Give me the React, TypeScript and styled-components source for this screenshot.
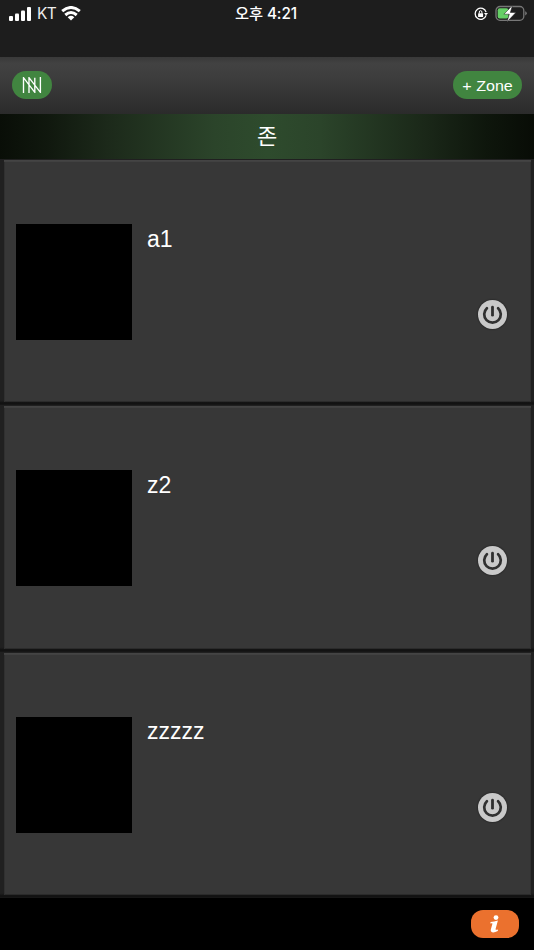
import React from "react";
import styled, { createGlobalStyle } from "styled-components";

const GlobalStyle = createGlobalStyle`
  * { box-sizing: border-box; }
  body { margin: 0; background: #000; overflow: hidden; }
  button { border: 0; padding: 0; font: inherit; color: inherit; }
  h1, h2, p { margin: 0; font-weight: 400; }
`;

const Screen = styled.div`
  width: 534px;
  height: 950px;
  display: flex;
  flex-direction: column;
  color: #fff;
  background: #000;
  font-family: "Liberation Sans", "Noto Sans CJK KR", sans-serif;
  overflow: hidden;
`;

const StatusBar = styled.header`
  flex: none;
  height: 57px;
  padding: 3px 7px 0 9px;
  display: grid;
  grid-template-columns: 1fr 64px 1fr;
  align-items: start;
  background: #1d1d1d;
`;

const StatusSide = styled.div<{ $end?: boolean }>`
  height: ${(p) => (p.$end ? 22 : 20)}px;
  display: flex;
  align-items: center;
  justify-content: ${(p) => (p.$end ? "flex-end" : "flex-start")};
  gap: ${(p) => (p.$end ? 7 : 6)}px;
`;

const Carrier = styled.span`
  width: 18px;
  padding-top: 1px;
  font: 400 15.5px/22px Inter, sans-serif;
  letter-spacing: -0.7px;
  color: #eee;
`;

const Clock = styled.time`
  font: 500 15.3px/22px Inter, "Noto Sans CJK KR", sans-serif;
  letter-spacing: -0.1px;
  white-space: nowrap;
  margin-left: -1px;
`;

const Toolbar = styled.nav`
  flex: none;
  height: 57px;
  padding: 0 12px 1px;
  display: flex;
  align-items: center;
  justify-content: space-between;
  background: linear-gradient(#393939, #424242 12%, #3c3c3c 40%, #2b2b2b);
`;

const Pill = styled.button<{ $width: number }>`
  width: ${(p) => p.$width}px;
  height: 28px;
  display: flex;
  align-items: center;
  justify-content: center;
  border-radius: 14px;
  background: #418540;
`;

const PillLabel = styled.span`
  font: 400 15px/27px "Liberation Sans", sans-serif;
  white-space: nowrap;
  transform: scaleX(1.07);
`;

const TitleBar = styled.h1`
  flex: none;
  height: 45px;
  display: flex;
  justify-content: center;
  background: linear-gradient(90deg, #090e07 0%, #10180e 9%, #1c291a 20%, #2b442a 40%, #2e4b2d 50%, #2b442a 60%, #1a2718 80%, #0e160c 91%, #080c06 100%);
  font: 400 22px/41px "Noto Sans CJK KR", sans-serif;
`;

const ZoneList = styled.main`
  flex: none;
  height: 739px;
  display: grid;
  grid-template-rows: repeat(3, 1fr);
  background: #202020;
`;

const Row = styled.section`
  padding: 1px 3px 3px 4px;
  background: linear-gradient(to top, #181818 0, #101010 2px, #1d1d1d 4px, transparent 5px);
`;

const Card = styled.article`
  height: 100%;
  padding: 1px 24px 0 12px;
  display: grid;
  grid-template-columns: 116px 1fr 29px;
  column-gap: 15px;
  align-items: center;
  background: #373737;
  box-shadow: inset 0 1px 0 #444, inset 0 2px 0 #414141, inset 1px 0 0 #303030, inset -1px 0 0 #303030, inset 0 -1px 0 #2b2b2b;
`;

const Thumb = styled.div`
  height: 116px;
  margin-top: 1px;
  background: #000;
`;

const ZoneName = styled.h2`
  height: 116px;
  padding-top: 1px;
  font-size: 23px;
  line-height: 29px;
`;

const PowerButton = styled.button`
  width: 29px;
  height: 29px;
  margin-top: 66px;
  border-radius: 50%;
  background: #c9c9c9;
  box-shadow: 0 0 1px 1px rgba(25, 25, 25, 0.35);
  svg { display: block; }
`;

const Footer = styled.footer`
  flex: 1;
  padding: 0 15px;
  display: flex;
  align-items: center;
  justify-content: flex-end;
  background: #000;
`;

const InfoButton = styled.button`
  width: 48px;
  height: 28px;
  display: grid;
  place-items: center;
  border-radius: 12px;
  background: #eb712e;
`;

const zones = ["a1", "z2", "zzzzz"];

function SignalIcon() {
  return (
    <svg width="22" height="15" viewBox="0 0 22 15" fill="#fff">
      <rect x="0" y="10" width="4" height="5" rx="1" />
      <rect x="6" y="7.5" width="4" height="7.5" rx="1" />
      <rect x="12" y="4.5" width="4" height="10.5" rx="1" />
      <rect x="18" y="1" width="4" height="14" rx="1" />
    </svg>
  );
}

function WifiIcon() {
  return (
    <svg width="20" height="15" viewBox="0 0 20 15" fill="none" stroke="#fff" strokeWidth="3">
      <path d="M1.2 5.2Q10-2.2 18.8 5.2M4.3 9Q10 4.1 15.7 9" />
      <path d="M6.7 11.2Q10 8.4 13.3 11.2L10 14.6Z" fill="#fff" stroke="none" />
    </svg>
  );
}

function OrientationLock() {
  return (
    <svg width="14" height="14" viewBox="0 0 14 14" fill="none" stroke="#fff">
      <path d="M12.1 8.4A5.6 5.6 0 1 1 12.1 5.1" strokeWidth="1.3" />
      <path d="M9.9 5.9h4.1L12 8.6Z" fill="#fff" stroke="none" />
      <rect x="4.1" y="6.2" width="5" height="3.8" rx=".5" fill="#fff" stroke="none" />
      <path d="M5.3 6.4V5a1.3 1.3 0 0 1 2.6 0v1.4" />
    </svg>
  );
}

function BatteryIcon() {
  return (
    <svg width="32" height="18" viewBox="0 0 32 18" fill="none">
      <rect x="1" y="1.5" width="27.8" height="13.8" rx="4" stroke="#777" strokeWidth="1.3" />
      <rect x="2.7" y="3.2" width="10.8" height="10.4" rx="2" fill="#65cf66" />
      <path d="M30.2 6.2q1.6.5 1.6 2.1t-1.6 2.1Z" fill="#777" />
      <path d="M17.5.3 8.9 9.2h5.4L12 16.9l8.9-9.4h-5.6Z" fill="#fff" stroke="#1d1d1d" strokeWidth=".5" />
    </svg>
  );
}

function BrandIcon() {
  return (
    <svg width="20" height="16" viewBox="0 0 20 16" fill="none" stroke="#fff" strokeWidth="1.35">
      <path d="M1.5 16V.7L12.8 15.3V.7M7 16V.7L18.4 15.3V0" />
    </svg>
  );
}

function PowerIcon() {
  return (
    <svg width="29" height="29" viewBox="0 0 29 29" fill="none" stroke="#303030" strokeLinecap="round">
      <path d="M8.9 8.2a8.3 8.3 0 1 0 11.2 0" strokeWidth="2.7" />
      <path d="M14.5 7.2v8" strokeWidth="2.8" />
    </svg>
  );
}

function InfoIcon() {
  return (
    <svg width="12" height="18" viewBox="0 0 12 18" fill="#fff">
      <circle cx="7" cy="2.6" r="2.4" />
      <path d="M1.6 7.1Q5 6.9 8.9 5.6L6.6 14Q6.4 15.4 9.1 14.5L8.8 16.1Q3.7 18.7 2.1 16.5 1.5 15.7 1.9 14.2L3.5 8.6Q2.8 8.2 1.3 8.5Z" />
    </svg>
  );
}

export default function App() {
  return (
    <Screen>
      <GlobalStyle />
      <StatusBar>
        <StatusSide><SignalIcon /><Carrier>KT</Carrier><WifiIcon /></StatusSide>
        <Clock>오후 4:21</Clock>
        <StatusSide $end><OrientationLock /><BatteryIcon /></StatusSide>
      </StatusBar>
      <Toolbar>
        <Pill $width={40} aria-label="Home"><BrandIcon /></Pill>
        <Pill $width={69}><PillLabel>+ Zone</PillLabel></Pill>
      </Toolbar>
      <TitleBar>존</TitleBar>
      <ZoneList>
        {zones.map((name) => (
          <Row key={name}>
            <Card>
              <Thumb />
              <ZoneName>{name}</ZoneName>
              <PowerButton aria-label={`Power ${name}`}><PowerIcon /></PowerButton>
            </Card>
          </Row>
        ))}
      </ZoneList>
      <Footer><InfoButton aria-label="Information"><InfoIcon /></InfoButton></Footer>
    </Screen>
  );
}
